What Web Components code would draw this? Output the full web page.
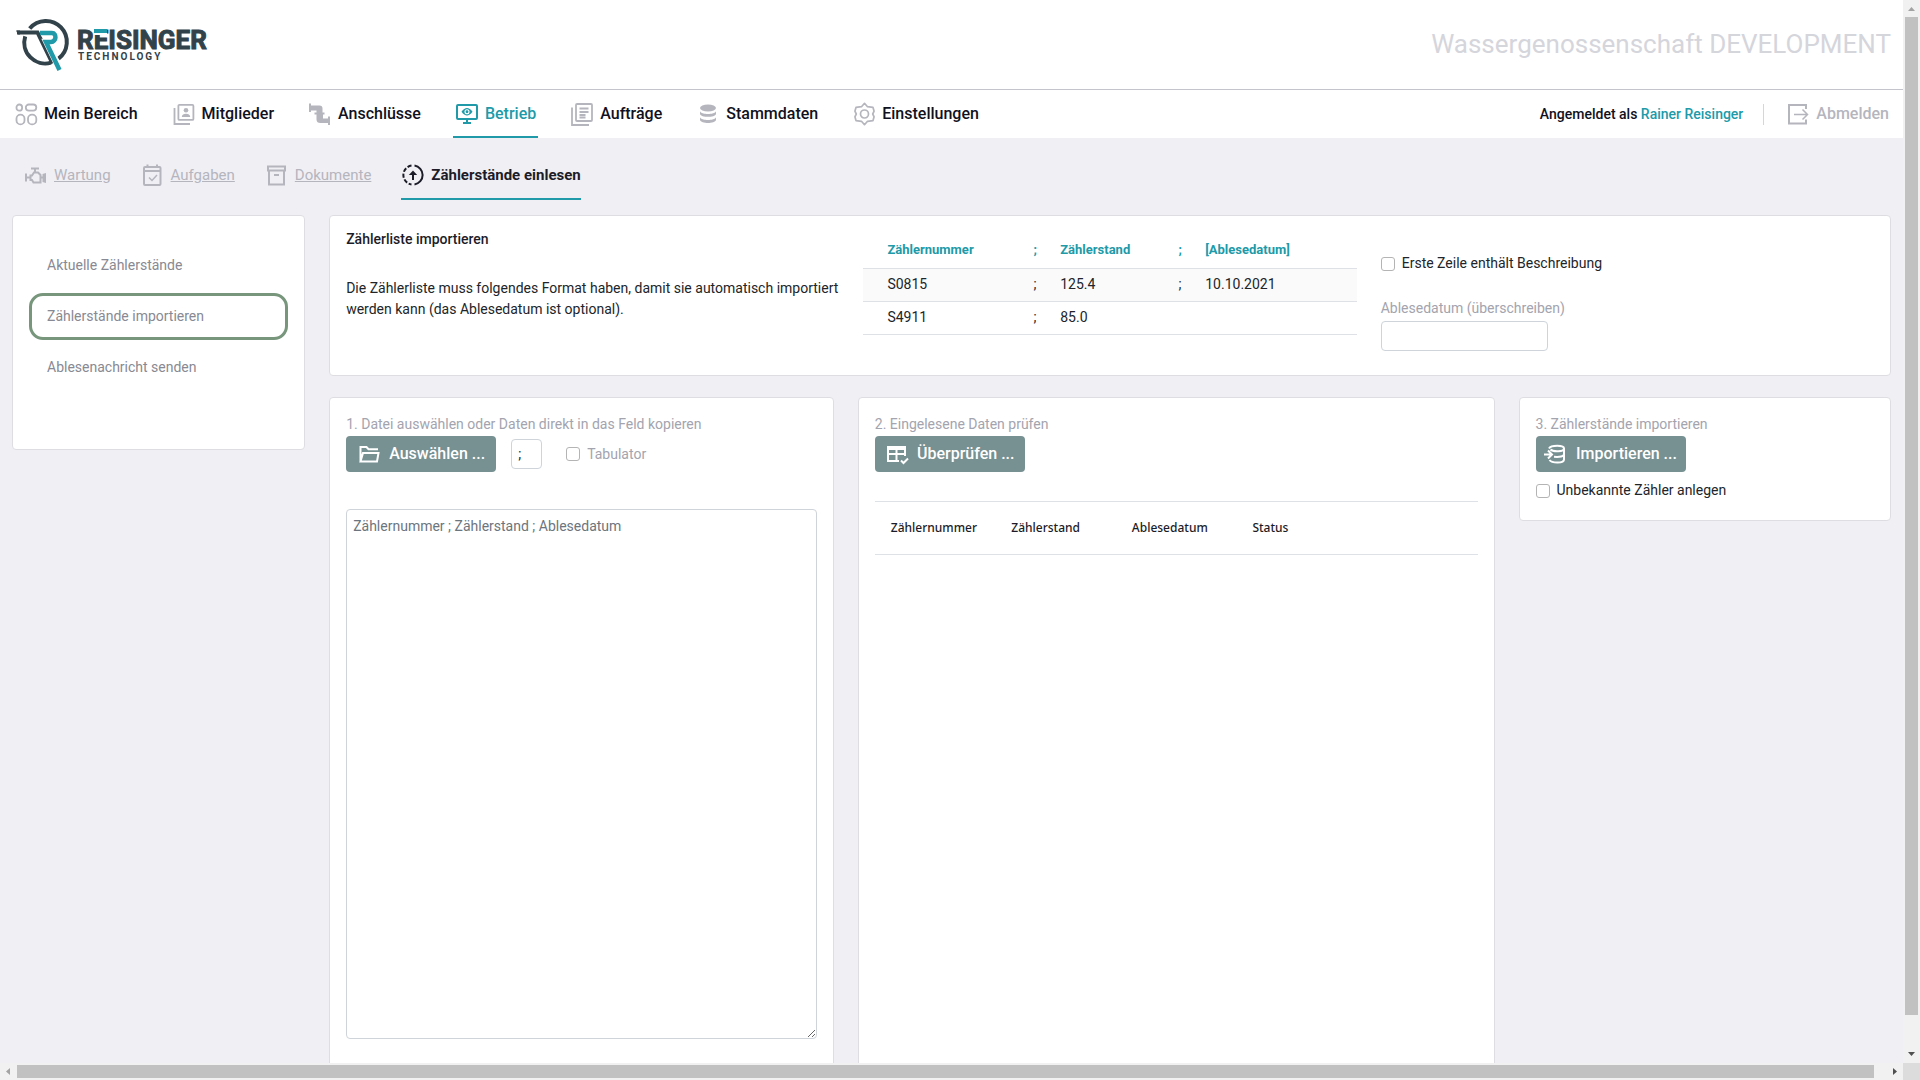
<!DOCTYPE html>
<html lang="de">
<head>
<meta charset="utf-8">
<title>Zählerstände einlesen</title>
<style>
  html, body { margin: 0; height: 100%; }
  body {
    --teal: #209aa8; --ink: #1c1c28; --muted: #a3a4ae; --icon: #b5b5be;
    --line: #dee2e6; --page: #f0eff4; --slate: #779092;
    font: 14px/21px Roboto, "Liberation Sans", sans-serif;
    color: #212529; background: var(--page); overflow: hidden;
  }
</style>
</head>
<body>
<app-window>
  <app-header></app-header>
  <main-nav></main-nav>
  <sub-nav></sub-nav>
  <import-page></import-page>
</app-window>

<script>
const define = (name, html) => {
  const tpl = document.createElement('template');
  tpl.innerHTML = '<style>*{box-sizing:border-box}:host{box-sizing:border-box}a{color:inherit;text-decoration:none}</style>' + html;
  customElements.define(name, class extends HTMLElement {
    constructor() {
      super();
      this.attachShadow({ mode: 'open' }).append(tpl.content.cloneNode(true));
    }
  });
};

const ICONS = {
  grid: '<g fill="none" stroke="currentColor" stroke-width="1.8"><rect x="1.500" y="2.500" width="5.600" height="6.200" rx="2.800"/><rect x="10.800" y="2.500" width="10.500" height="6.200" rx="3.100"/><rect x="1.500" y="12.600" width="8" height="9.800" rx="4"/><rect x="13" y="12.600" width="8.300" height="9.800" rx="4"/></g>',
  members: '<g fill="none" stroke="currentColor" stroke-width="1.8"><rect x="5.400" y="2.900" width="15" height="15" rx="1"/><path d="M1.500 6v16H17"/></g><circle cx="13" cy="8.300" r="2.300" fill="currentColor"/><path d="M8.800 15c0-2.400 2-3.300 4.200-3.300s4.200.900 4.200 3.300z" fill="currentColor"/>',
  pipes: '<path fill="currentColor" d="M0 1.500h2v2h8.500c2 0 3 1 3 3v4h2v2h-1.500v4h5v-2h2v8.500h-2v-2h-7.500c-2.500 0-4-1-4-3.500V12.500H5.500v-2h2V8.500H2V10H0z"/>',
  monitor: '<g fill="none" stroke="currentColor" stroke-width="2"><rect x="1" y="3" width="20" height="14" rx="1"/><path d="M11 17v4M7 21h8"/></g><path d="M5.500 9.800Q11 2.300 16.500 9.800Q11 17.300 5.500 9.800z" fill="currentColor"/><circle cx="11" cy="9.800" r="2" fill="none" stroke="#fff" stroke-width="1.100"/>',
  orders: '<g fill="none" stroke="currentColor" stroke-width="1.800"><rect x="5" y="2" width="16" height="17" rx="1"/><path d="M1 5.500V23h17M8.500 6.500h9M8.500 10h9M8.500 13h6M8.500 15.500h6"/></g>',
  database: '<g fill="currentColor"><ellipse cx="11" cy="6" rx="8" ry="3.500"/><path d="M3 9.300c1.500 3.700 14.500 3.700 16 0v2.700c-1 3.800-15 3.800-16 0zM3 15.300c1.500 3.700 14.500 3.700 16 0v2.700c-1 4-15 4-16 0z"/></g>',
  gear: '<g transform="translate(.5 0)" fill="none" stroke="currentColor" stroke-width="1.700" stroke-linejoin="round"><path d="M11 1.300L14 4.700 19.500 5.400 20.600 9.200 19.200 12 20.600 14.800 19.500 18.600 14 19.300 11 22.700 8 19.300 2.500 18.600 1.400 14.800 2.800 12 1.400 9.200 2.500 5.400 8 4.700z"/><circle cx="11" cy="12" r="4"/></g>',
  logout: '<g fill="none" stroke="currentColor"><path d="M19 7V3H2v18.500h17v-4" stroke-width="2"/><path d="M7 12.500h13M15.500 7.500l5 5-5 5" stroke-width="1.500"/></g>',
  engine: '<path fill="none" stroke="currentColor" stroke-width="2" d="M7 5.500h8M11 5.500V9M2 10.500v8M2 14.500h4M6.500 12.500h1.500l2-3h4l2.500 2.500v7.500H9.500l-1.500-2.500H6.500zM16.500 14.500H20"/><path fill="currentColor" d="M18.500 11l3.500-1v10l-3.500-1z"/>',
  task: '<g transform="translate(1 0)" fill="none" stroke="currentColor"><rect x="2" y="4" width="16.500" height="18" rx="1" stroke-width="2"/><path d="M5.500 1.500v3M15 1.500v3M2 8h17" stroke-width="2"/><path d="M7 14.500l3 3 5-5.500" stroke-width="1.500"/></g>',
  archive: '<g transform="translate(1 0)" fill="none" stroke="currentColor" stroke-width="2"><rect x="2" y="3.500" width="17" height="4"/><path d="M3 7.500v14h15v-14M8 12h5"/></g>',
  upload: '<g transform="translate(1 0)"><g fill="none" stroke="currentColor" stroke-width="2"><path d="M12.500 2.600a9.500 9.500 0 0 1 0 18.800"/><path d="M9.500 2.600a9.500 9.500 0 0 0 0 18.800" stroke-dasharray="4.200 1.800"/><path d="M11 17V9"/></g><path d="M6.800 12L11 7.500l4.200 4.500z" fill="currentColor"/></g>',
  folder: '<path transform="translate(1 0)" fill="none" stroke="currentColor" stroke-width="2" d="M2.500 19.500V5h6l2 2.200h9.500M2.500 19.500L5 11h15.500L19 19.500z"/>',
  tablecheck: '<g transform="translate(1 0)"><path fill="none" stroke="currentColor" stroke-width="2" d="M13 19H2V5h17v9M2 12h17M10.500 7v12"/><path fill="currentColor" d="M1 4h19v4H1z"/><path fill="none" stroke="currentColor" stroke-width="2" d="M15 18.500l2.500 2.500 4.500-4.500"/></g>',
  dbimport: '<g fill="none" stroke="currentColor" stroke-width="2"><path d="M5 6.500C7 2.800 20 2.800 20 6.500v11c0 4-12 4-14.500.500"/><path d="M6.500 7.500C9 10 20 10 20 6.500M20 12c0 2.500-4.500 3.300-10 2.800"/><path d="M0 12.500h7.500M4 8.500l4 4-4 4"/></g>'
};
customElements.define('ui-icon', class extends HTMLElement {
  constructor() {
    super();
    this.attachShadow({ mode: 'open' }).innerHTML =
      `<style>:host{display:block;flex:none;width:22px;height:24px}svg{display:block;overflow:visible}</style>
       <svg width="22" height="24" viewBox="0 0 22 24" aria-hidden="true">${ICONS[this.getAttribute('name')]}</svg>`;
  }
});

/* Frame with the two scroll bars */
define('app-window', `
<style>
  :host { display: grid; height: 100vh; grid-template: minmax(0,1fr) 17px / minmax(0,1fr) 17px; }
  .view { overflow: hidden; }
  .bar { display: flex; background: #f1f1f1; padding: 0 2px; flex-direction: column; align-items: center; }
  .bar.h { flex-direction: row; padding: 2px 0; }
  .cap { flex: none; width: 17px; height: 17px; display: block; }
  .thumb { background: #c1c1c1; width: 13px; flex: 998; }
  .rest { flex: 31; }
  .h .thumb { width: auto; height: 13px; flex: 1857; }
  .h .rest { flex: 12; }
  .corner { background: #dcdcdc; }
</style>
<div class="view"><slot></slot></div>
<div class="bar"><svg class="cap" viewBox="0 0 17 17"><path d="M5 11h7L8.500 7z" fill="#a3a3a3"/></svg><div class="thumb"></div><div class="rest"></div><svg class="cap" viewBox="0 0 17 17"><path d="M5 6h7l-3.500 4z" fill="#505050"/></svg></div>
<div class="bar h"><svg class="cap" viewBox="0 0 17 17"><path d="M10 5v7L6 8.500z" fill="#a3a3a3"/></svg><div class="thumb"></div><div class="rest"></div><svg class="cap" viewBox="0 0 17 17"><path d="M7 5v7l4-3.500z" fill="#505050"/></svg></div>
<div class="corner"></div>`);

define('brand-logo', `
<style>
  :host { display: flex; align-items: center; gap: 5px; color: #32424a; }
  svg { display: block; }
  .words { display: grid; padding-top: 5px; }
  .name { position: relative; font: 700 26px/22px Roboto, sans-serif; -webkit-text-stroke: 1px #32424a; }
  .name::after { content: ""; position: absolute; left: 17px; top: 0; width: 13px; height: 4px; background: var(--teal); border-bottom: 2px solid #fff; box-sizing: content-box; }
  .sub { font: 700 10px/12px Roboto, sans-serif; letter-spacing: 2px; padding-left: 1px; }
</style>
<svg width="56" height="54" viewBox="0 0 56 54" role="img" aria-label="Reisinger">
  <g fill="none" stroke="#32424a">
    <path d="M13.700 11.500A21 21 0 1 1 42.500 41.700M35 45.700A21 21 0 0 1 9.200 19.300" stroke-width="4"/>
    <path d="M1 15.500H21.500L36.500 46.500" stroke-width="4"/>
  </g>
  <path d="M0 13.500h4v4H2z" fill="#32424a"/>
  <path d="M25 16h11c5 0 4.500 9-1 9h-4.500L44 53" fill="none" stroke="#fff" stroke-width="6.500"/>
  <path d="M24 16h12c5 0 4.500 9-1 9h-5L43.500 53" fill="none" stroke="var(--teal)" stroke-width="4.500"/>
</svg>
<div class="words"><div class="name">REISINGER</div><div class="sub">TECHNOLOGY</div></div>`);

define('app-header', `
<style>
  :host { display: flex; justify-content: space-between; align-items: center; height: 90px; padding: 0 12px 2px 16px; background: #fff; border-bottom: 1px solid #c4c4cc; }
  h1 { margin: 0; font-size: 26px; line-height: 32px; font-weight: 400; color: #d5d5dc; }
</style>
<brand-logo></brand-logo><h1>Wassergenossenschaft DEVELOPMENT</h1>`);

define('nav-item', `
<style>
  :host { display: flex; align-items: stretch; font-size: 16px; line-height: 24px; font-weight: 500; color: #11111d; }
  a { display: flex; align-items: center; gap: 7px; padding: 0 2px 0 3px; border: solid transparent; border-width: 2px 0; }
  :host([active]) { color: var(--teal); }
  :host([active]) a { border-bottom-color: var(--teal); }
  :host([quiet]) { color: var(--icon); }
</style>
<a href="#"><slot name="icon"></slot><slot></slot></a>`);

define('main-nav', `
<style>
  :host { display: flex; justify-content: space-between; height: 48px; padding: 0 12px; background: #fff; }
  nav { display: flex; gap: 30px; }
  ui-icon { color: var(--icon); }
  nav-item[active] ui-icon { color: var(--teal); }
  .user { display: flex; align-items: center; font-weight: 500; color: #11111d; }
  .user a { color: var(--teal); }
  .rule { width: 1px; height: 21px; background: #d5d5dc; margin: 0 20px; }
  .user nav-item { height: 100%; }
</style>
<nav>
  <nav-item><ui-icon slot="icon" name="grid"></ui-icon>Mein Bereich</nav-item>
  <nav-item><ui-icon slot="icon" name="members"></ui-icon>Mitglieder</nav-item>
  <nav-item><ui-icon slot="icon" name="pipes"></ui-icon>Anschlüsse</nav-item>
  <nav-item active><ui-icon slot="icon" name="monitor"></ui-icon>Betrieb</nav-item>
  <nav-item><ui-icon slot="icon" name="orders"></ui-icon>Aufträge</nav-item>
  <nav-item><ui-icon slot="icon" name="database"></ui-icon>Stammdaten</nav-item>
  <nav-item><ui-icon slot="icon" name="gear"></ui-icon>Einstellungen</nav-item>
</nav>
<div class="user"><span>Angemeldet als <a href="#">Rainer Reisinger</a></span><span class="rule"></span>
  <nav-item quiet><ui-icon slot="icon" name="logout"></ui-icon>Abmelden</nav-item></div>`);

define('sub-nav', `
<style>
  :host { display: flex; gap: 30px; height: 62px; padding: 0 24px; font-size: 15px; line-height: 22px; color: var(--icon); }
  a { display: flex; align-items: center; gap: 8px; border: solid transparent; border-width: 13px 0 2px; }
  a span { text-decoration: underline; }
  a.on { font-weight: 700; color: var(--ink); border-bottom-color: var(--teal); }
  a.on span { text-decoration: none; }
</style>
<a href="#"><ui-icon name="engine"></ui-icon><span>Wartung</span></a>
<a href="#"><ui-icon name="task"></ui-icon><span>Aufgaben</span></a>
<a href="#"><ui-icon name="archive"></ui-icon><span>Dokumente</span></a>
<a href="#" class="on"><ui-icon name="upload"></ui-icon><span>Zählerstände einlesen</span></a>`);

define('ui-card', `
<style>:host { display: block; background: #fff; border: 1px solid #dedee2; border-radius: 4px; padding: 16px; }</style>
<slot></slot>`);

define('side-menu', `
<style>
  :host { display: grid; gap: 4px; padding: 10px 0 42px; color: #888992; }
  a { display: block; border: 3px solid transparent; border-radius: 14px; padding: 10px 15px; }
  a.on { border-color: #77967c; }
</style>
<a href="#">Aktuelle Zählerstände</a>
<a href="#" class="on">Zählerstände importieren</a>
<a href="#">Ablesenachricht senden</a>`);

define('check-box', `
<style>
  :host { display: block; }
  label { display: flex; align-items: center; gap: 7px; }
  input { appearance: none; margin: 0; width: 14px; height: 14px; border: 1px solid #b4b4b4; border-radius: 3px; background: #fff; }
</style>
<label><input type="checkbox"><slot></slot></label>`);

define('action-button', `
<style>
  :host { display: block; width: 150px; }
  button { display: flex; width: 100%; height: 36px; align-items: center; justify-content: center; gap: 10px; border: 0; padding: 0; border-radius: 4px; background: var(--slate); color: #fff; font: 500 16px/24px Roboto, sans-serif; }
</style>
<button type="button"><slot name="icon"></slot><slot></slot></button>`);

define('format-table', `
<style>
  :host { display: block; }
  table { width: 100%; border-collapse: collapse; table-layout: fixed; }
  th, td { text-align: left; padding: 5px 0 6px; border-bottom: 1px solid var(--line); }
  th { font-size: 13px; font-weight: 700; color: var(--teal); padding: 7px 0 8px; }
  th:first-child, td:first-child { padding-left: 24px; }
  tbody tr:first-child { background: #fafafa; }
</style>
<table>
  <colgroup><col style="width:34.500%"><col style="width:5.400%"><col style="width:24%"><col style="width:5.400%"><col></colgroup>
  <thead><tr><th>Zählernummer</th><th>;</th><th>Zählerstand</th><th>;</th><th>[Ablesedatum]</th></tr></thead>
  <tbody><tr><td>S0815</td><td>;</td><td>125.4</td><td>;</td><td>10.10.2021</td></tr>
  <tr><td>S4911</td><td>;</td><td>85.0</td><td></td><td></td></tr></tbody>
</table>`);

define('format-info', `
<style>
  :host { display: grid; grid-template-columns: repeat(3, minmax(0, 1fr)); gap: 24px; padding-bottom: 8px; }
  h2 { margin: -3px 0 28px; font-size: 14px; line-height: 21px; font-weight: 500; color: var(--ink); }
  p { margin: 0; }
  .opts { padding-top: 21px; }
  .opts label { display: block; margin-top: 24px; color: var(--muted); }
  .opts input { display: block; margin-top: 2px; width: 167px; height: 30px; border: 1px solid #ced4da; border-radius: 4px; }
</style>
<div><h2>Zählerliste importieren</h2><p>Die Zählerliste muss folgendes Format haben, damit sie automatisch importiert werden kann (das Ablesedatum ist optional).</p></div>
<format-table></format-table>
<div class="opts"><check-box>Erste Zeile enthält Beschreibung</check-box>
<label for="date">Ablesedatum (überschreiben)</label><input id="date" type="text"></div>`);

define('step-file', `
<style>
  :host { display: block; }
  .row { display: flex; align-items: center; }
  .cap { display: block; padding-bottom: 1px; color: var(--muted); }
  .sep { width: 31px; height: 30px; margin: 0 24px 0 15px; padding: 0 6px; border: 1px solid #ced4da; border-radius: 4px; font: 14px/21px Roboto, sans-serif; color: #212529; }
  check-box { color: var(--muted); }
  textarea { display: block; width: 100%; height: 530px; margin: 37px 0 24px; padding: 6px; border: 1px solid #ced4da; border-radius: 4px; font: 14px/21px Roboto, sans-serif; }
  textarea::placeholder { color: #6c757d; }
</style>
<label class="cap" for="data">1. Datei auswählen oder Daten direkt in das Feld kopieren</label>
<div class="row"><action-button><ui-icon slot="icon" name="folder"></ui-icon>Auswählen ...</action-button>
<input class="sep" type="text" value=";" aria-label="Trennzeichen"><check-box>Tabulator</check-box></div>
<textarea id="data" placeholder="Zählernummer ; Zählerstand ; Ablesedatum"></textarea>`);

define('step-check', `
<style>
  :host { display: block; }
  .cap { padding-bottom: 1px; color: var(--muted); }
  table { width: 100%; margin-top: 29px; border-collapse: collapse; table-layout: fixed; font: 12px/20px "Noto Sans", sans-serif; color: var(--ink); }
  th { text-align: left; font-weight: 500; padding: 16px 0 16px 16px; border: solid var(--line); border-width: 1px 0; }
</style>
<div class="cap">2. Eingelesene Daten prüfen</div>
<action-button><ui-icon slot="icon" name="tablecheck"></ui-icon>Überprüfen ...</action-button>
<table><thead><tr><th>Zählernummer</th><th>Zählerstand</th><th>Ablesedatum</th><th>Status</th><th></th></tr></thead></table>`);

define('step-import', `
<style>
  :host { display: block; padding-bottom: 3px; }
  .cap { padding-bottom: 1px; color: var(--muted); }
  check-box { margin-top: 8px; }
</style>
<div class="cap">3. Zählerstände importieren</div>
<action-button><ui-icon slot="icon" name="dbimport"></ui-icon>Importieren ...</action-button>
<check-box>Unbekannte Zähler anlegen</check-box>`);

define('import-page', `
<style>
  :host, .main { display: grid; grid-template-columns: repeat(12, minmax(0, 1fr)); gap: 21px 24px; align-items: start; }
  :host { padding: 15px 12px 0; }
  .side { grid-column: span 2; }
  .main { grid-column: span 10; }
  .top { grid-column: span 12; }
  .file { grid-column: span 4; }
  .check { grid-column: span 5; align-self: stretch; }
  .imp { grid-column: span 3; }
</style>
<ui-card class="side"><side-menu></side-menu></ui-card>
<div class="main">
  <ui-card class="top"><format-info></format-info></ui-card>
  <ui-card class="file"><step-file></step-file></ui-card>
  <ui-card class="check"><step-check></step-check></ui-card>
  <ui-card class="imp"><step-import></step-import></ui-card>
</div>`);
</script>
</body>
</html>
